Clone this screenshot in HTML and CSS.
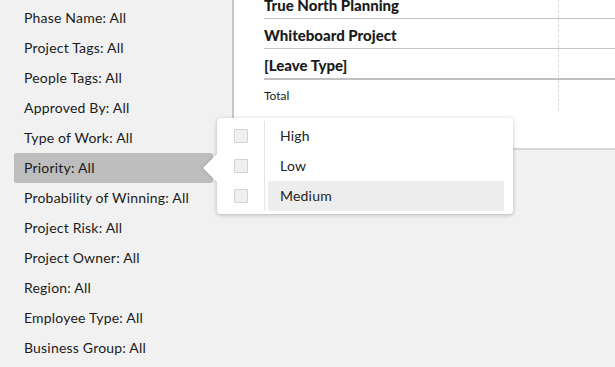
FILE: index.html
```html
<!DOCTYPE html>
<html lang="en">
<head>
  <meta charset="UTF-8" />
  <title>Report filters</title>
  <link rel="stylesheet" href="styles.css">
</head>
<body>
  <div class="page">
    <!-- 筛选条件 -->
    <ul class="filters">
      <li class="filter">Phase Name: All</li>
      <li class="filter">Project Tags: All</li>
      <li class="filter">People Tags: All</li>
      <li class="filter">Approved By: All</li>
      <li class="filter">Type of Work: All</li>
      <li class="filter active">Priority: All</li>
      <li class="filter">Probability of Winning: All</li>
      <li class="filter">Project Risk: All</li>
      <li class="filter">Project Owner: All</li>
      <li class="filter">Region: All</li>
      <li class="filter">Employee Type: All</li>
      <li class="filter">Business Group: All</li>
    </ul>

    <!-- 报表区域 -->
    <div class="report">
      <div class="report-rows">
        <div class="row"><div class="name">True North Planning</div><div class="value"></div></div>
        <div class="row"><div class="name">Whiteboard Project</div><div class="value"></div></div>
        <div class="row last"><div class="name">[Leave Type]</div><div class="value"></div></div>
        <div class="row total"><div class="name">Total</div><div class="value"></div></div>
      </div>
    </div>
  </div>

  <!-- 优先级下拉 -->
  <div class="popover">
    <div class="checks">
      <span class="checkbox"></span>
      <span class="checkbox"></span>
      <span class="checkbox"></span>
    </div>
    <ul class="options">
      <li class="option">High</li>
      <li class="option">Low</li>
      <li class="option hover">Medium</li>
    </ul>
  </div>
</body>
</html>
```

FILE: styles.css
```css
* {
  box-sizing: border-box;
  margin: 0;
  padding: 0;
}

body {
  font-family: Lato, "Open Sans", sans-serif;
  font-size: 14px;
  letter-spacing: 0.2px;
  color: #1b1b1b;
  background: #f1f1f1;
  width: 615px;
  height: 367px;
  overflow: hidden;
  position: relative;
}

.page {
  display: flex;
  align-items: flex-start;
}

/* 左侧筛选列表 */
.filters {
  list-style: none;
  width: 232px;
  padding: 3px 0 0 14px;
  flex-shrink: 0;
}

.filter {
  width: 199px;
  height: 30px;
  line-height: 30px;
  padding-left: 10px;
  border-radius: 2px;
  white-space: nowrap;
}

.filter.active {
  background: #bdbdbd;
}

/* 报表 */
.report {
  flex: 1;
  height: 150px;
  background: #fff;
  border-left: 2px solid #c8c8c8;
  border-bottom: 2px solid #d6d6d6;
  padding-left: 30px;
  overflow: hidden;
}

.report-rows {
  margin-top: -11px;
}

.row {
  display: grid;
  grid-template-columns: 294px 1fr;
  height: 30px;
  border-bottom: 1px solid #c4c4c4;
}

.row .name {
  font-weight: 900;
  font-size: 15px;
  letter-spacing: 0;
  line-height: 18px;
  padding-top: 7px;
  white-space: nowrap;
}

.row .value {
  border-left: 1px dashed #d8d8d8;
}

.row.last {
  border-bottom: 2px solid #c0c0c0;
  height: 31px;
}

.row.total {
  height: 31px;
  border-bottom: none;
}

.row.total .name {
  font-weight: 400;
  font-size: 12px;
  line-height: 16px;
  padding-top: 8px;
}

/* 弹出层 */
.popover {
  position: absolute;
  left: 217px;
  top: 118px;
  width: 296px;
  height: 96px;
  background: #fff;
  border-radius: 4px;
  box-shadow: 0 1px 4px rgba(0, 0, 0, 0.25);
  display: flex;
  padding: 3px 9px 3px 0;
}

.popover::before {
  content: "";
  position: absolute;
  left: -10px;
  top: 40px;
  width: 20px;
  height: 20px;
  background: #fff;
  transform: rotate(45deg);
  box-shadow: -1px 1px 2px rgba(0, 0, 0, 0.12);
}

.checks {
  position: relative;
  width: 48px;
  border-right: 1px solid #e4e4e4;
  display: flex;
  flex-direction: column;
  align-items: center;
  background: #fff;
}

.checkbox {
  width: 14px;
  height: 14px;
  margin: 8px 0;
  border: 1px solid #d3d3d3;
  background: #efefef;
  border-radius: 1px;
}

.options {
  list-style: none;
  flex: 1;
  padding-left: 3px;
}

.option {
  height: 30px;
  line-height: 30px;
  padding-left: 12px;
  color: #222;
  border-radius: 2px;
}

.option.hover {
  background: #ededed;
}
```
